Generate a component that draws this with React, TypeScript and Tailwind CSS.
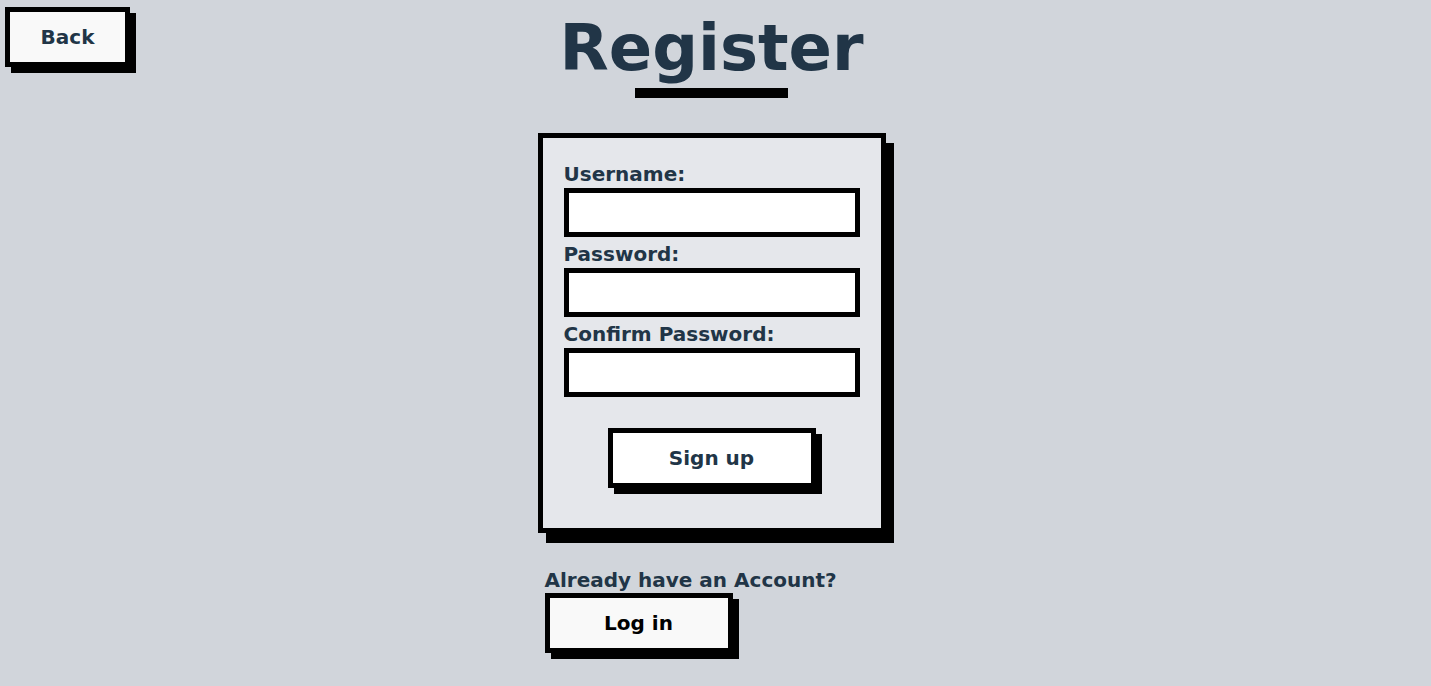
import React, { useState } from 'react';

const App: React.FC = () => {
  const [username, setUsername] = useState('');
  const [password, setPassword] = useState('');
  const [confirm, setConfirm] = useState('');

  const fields = [
    { label: 'Username:', value: username, set: setUsername, type: 'text' },
    { label: 'Password:', value: password, set: setPassword, type: 'password' },
    { label: 'Confirm Password:', value: confirm, set: setConfirm, type: 'password' },
  ];

  return (
    <div className="min-h-screen w-full bg-[#d1d5db] pr-2 font-['DejaVu_Sans',sans-serif] font-bold text-[#213547]">
      {/* Header */}
      <div className="grid grid-cols-[1fr_auto_1fr]">
        <div>
          <button className="ml-[5px] mt-[7px] h-[60px] w-[125px] border-[5px] border-black bg-[#f9f9f9] text-[20px] leading-6 text-[#213547] shadow-[6px_6px_0_0_#000]">
            Back
          </button>
        </div>
        <div className="flex flex-col items-center pt-4">
          <h1 className="text-[64px] leading-none font-bold">Register</h1>
          <div className="mt-2 h-[10px] w-[153px] bg-black" />
        </div>
        <div />
      </div>

      {/* Card */}
      <div className="mt-[35px] flex flex-col items-center">
        <div className="w-[348px]">
          <form
            className="flex flex-col border-[5px] border-black bg-[#e5e7eb] px-[21px] pt-6 pb-10 shadow-[8px_10px_0_0_#000]"
            onSubmit={(e) => e.preventDefault()}
          >
            {fields.map((f, i) => (
              <div key={f.label} className={i > 0 ? 'mt-[5px]' : ''}>
                <label className="block text-[20px] leading-6">{f.label}</label>
                <input
                  type={f.type}
                  value={f.value}
                  onChange={(e) => f.set(e.target.value)}
                  className="mt-[2px] block h-[49px] w-full border-[5px] border-black bg-white px-2 text-[18px] outline-none"
                />
              </div>
            ))}
            <button
              type="submit"
              className="mx-auto mt-[31px] h-[60px] w-[208px] border-[5px] border-black bg-white text-[20px] text-[#213547] shadow-[6px_6px_0_0_#000]"
            >
              Sign up
            </button>
          </form>

          {/* Login link */}
          <div className="mt-[35px] pl-[7px]">
            <p className="text-[20px] leading-6">Already have an Account?</p>
            <button className="mt-px h-[60px] w-[188px] border-[5px] border-black bg-[#f9f9f9] text-[20px] text-black shadow-[6px_6px_0_0_#000]">
              Log in
            </button>
          </div>
        </div>
      </div>
    </div>
  );
};

export default App;
